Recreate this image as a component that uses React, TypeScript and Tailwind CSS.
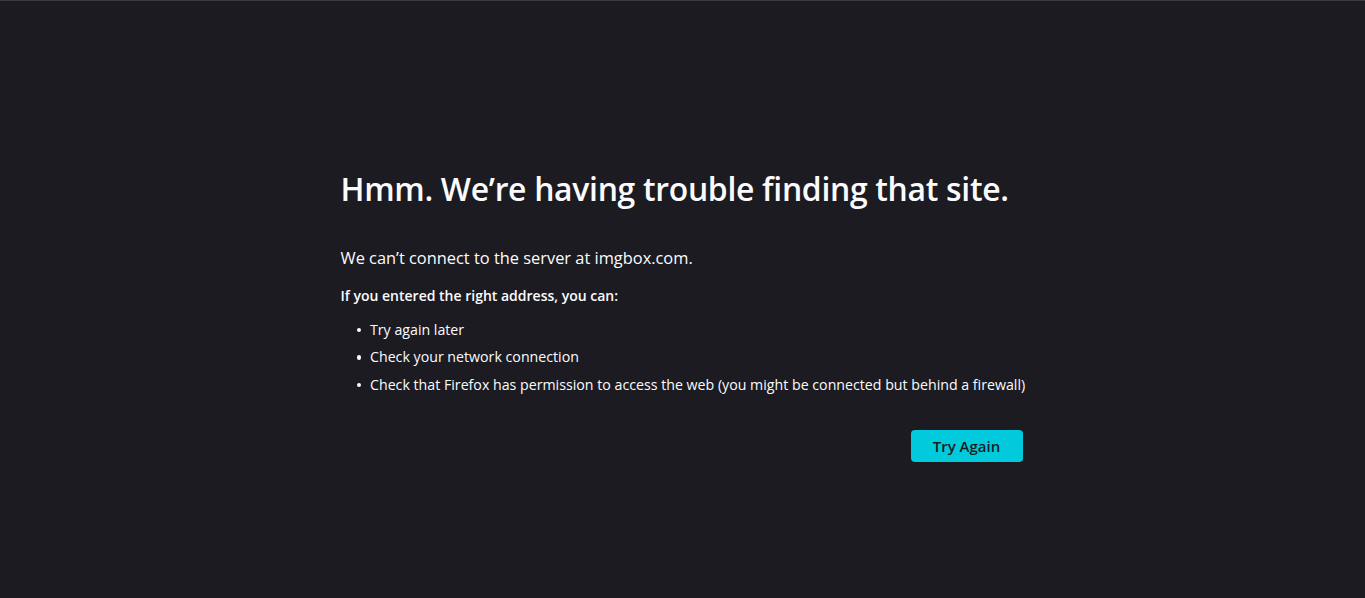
import { FC } from "react";

const items = [
  "Try again later",
  "Check your network connection",
  "Check that Firefox has permission to access the web (you might be connected but behind a firewall)",
];

const App: FC = () => {
  return (
    <div className="min-h-screen bg-[#1c1b22] border-t border-[#3b3a42] text-[#fbfbfe] font-['Open_Sans',sans-serif]">
      <div className="mx-auto w-[684px] pt-[164px]">
        <h1 className="whitespace-nowrap text-[31.9px] font-semibold leading-[48px] tracking-[-0.3px]">
          Hmm. We’re having trouble finding that site.
        </h1>
        <p className="mt-[33px] text-[16.4px] leading-[24px]">We can’t connect to the server at imgbox.com.</p>
        <p className="mt-[16px] text-[14px] font-semibold leading-[20px]">If you entered the right address, you can:</p>
        <ul className="mt-[10px] pl-[16px] text-[14.2px] leading-[20px]">
          {items.map((t) => (
            <li key={t} className="flex items-center gap-[9px] py-[3.75px] whitespace-nowrap">
              <span className="w-[4.5px] h-[4.5px] rounded-full bg-[#fbfbfe] shrink-0" />
              {t}
            </li>
          ))}
        </ul>
        <div className="mt-[31.5px] flex justify-end pr-[2px]">
          <button className="w-[112px] h-[32px] rounded-[4px] bg-[#00cadb] text-[#1c1b22] text-[15px] font-semibold">
            Try Again
          </button>
        </div>
      </div>
    </div>
  );
};

export default App;
